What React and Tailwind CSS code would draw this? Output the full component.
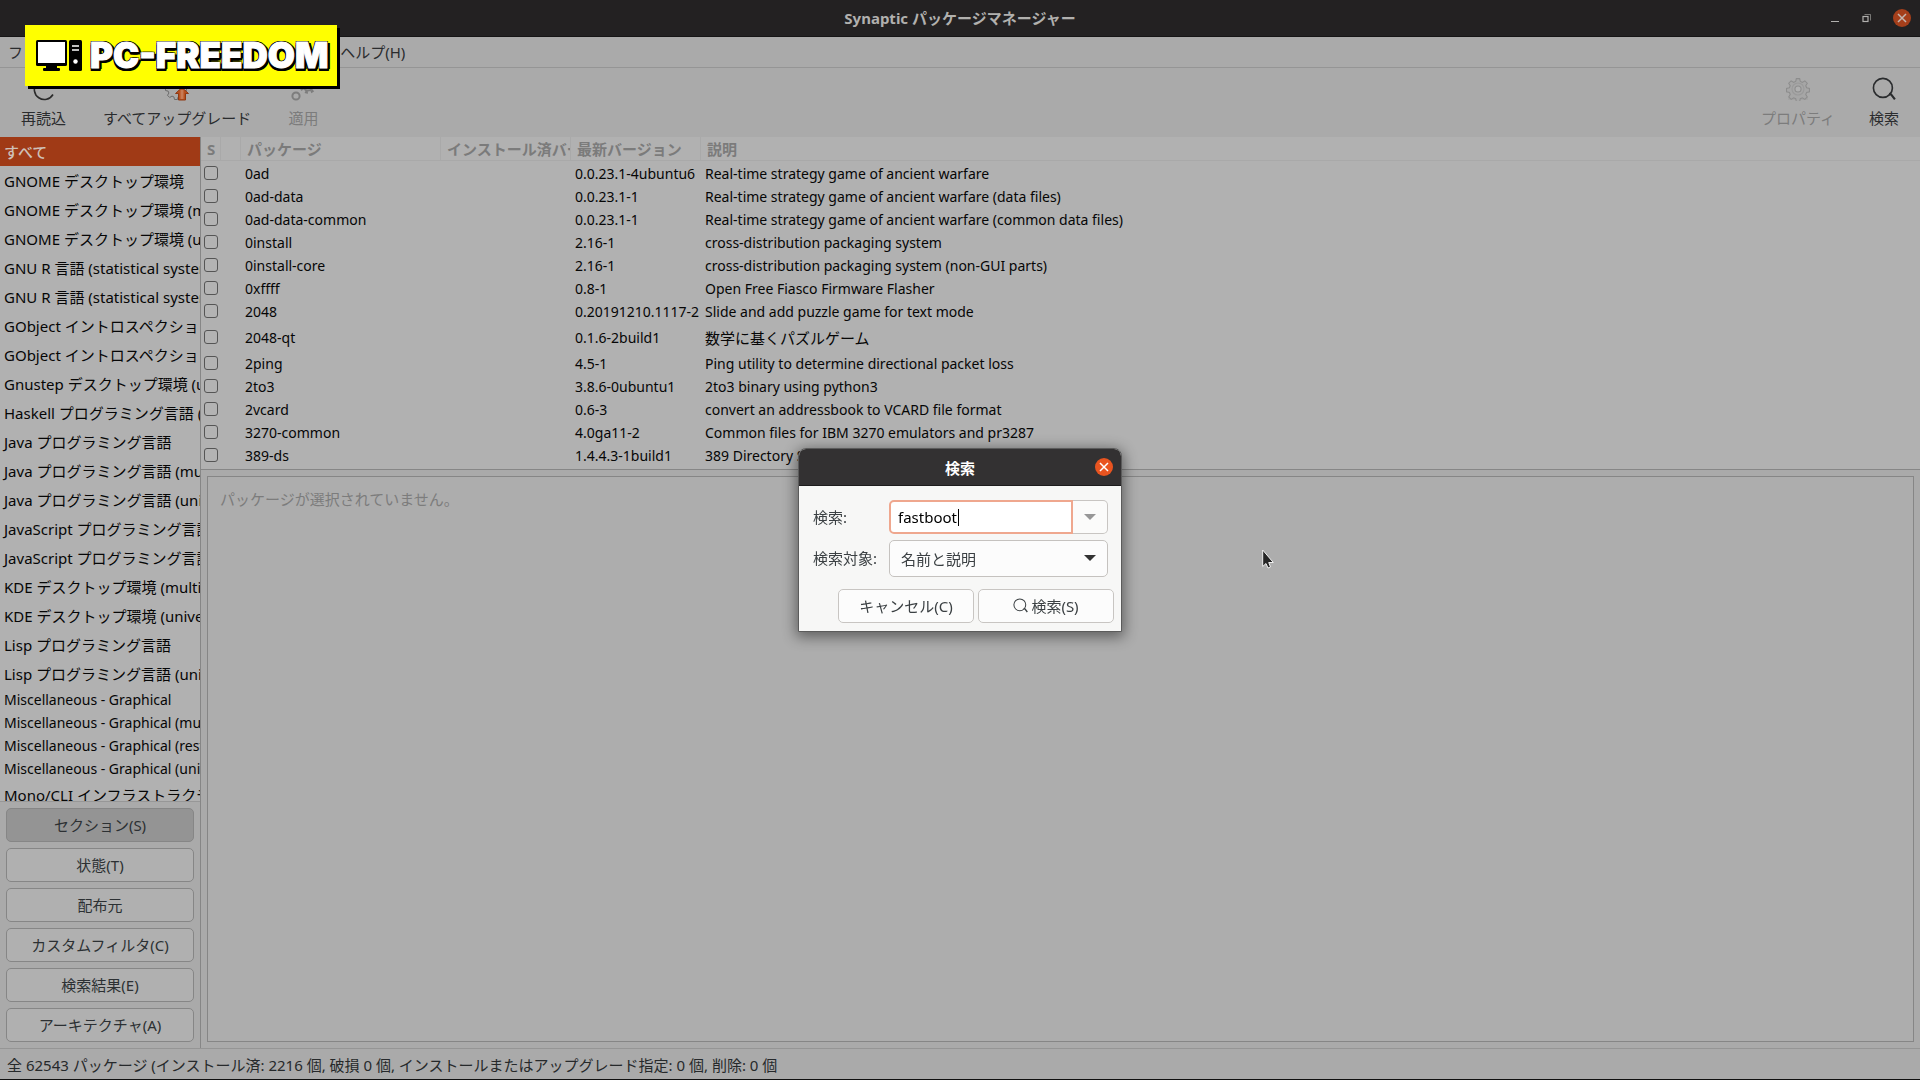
import React from "react";

const sections = [
  "すべて",
  "GNOME デスクトップ環境",
  "GNOME デスクトップ環境 (multiverse)",
  "GNOME デスクトップ環境 (universe)",
  "GNU R 言語 (statistical system)",
  "GNU R 言語 (statistical system) (universe)",
  "GObject イントロスペクション",
  "GObject イントロスペクション (universe)",
  "Gnustep デスクトップ環境 (universe)",
  "Haskell プログラミング言語 (universe)",
  "Java プログラミング言語",
  "Java プログラミング言語 (multiverse)",
  "Java プログラミング言語 (universe)",
  "JavaScript プログラミング言語",
  "JavaScript プログラミング言語 (universe)",
  "KDE デスクトップ環境 (multiverse)",
  "KDE デスクトップ環境 (universe)",
  "Lisp プログラミング言語",
  "Lisp プログラミング言語 (universe)",
  "Miscellaneous - Graphical",
  "Miscellaneous - Graphical (multiverse)",
  "Miscellaneous - Graphical (restricted)",
  "Miscellaneous - Graphical (universe)",
  "Mono/CLI インフラストラクチャ",
];

const packages = [
  ["0ad", "0.0.23.1-4ubuntu6", "Real-time strategy game of ancient warfare"],
  ["0ad-data", "0.0.23.1-1", "Real-time strategy game of ancient warfare (data files)"],
  ["0ad-data-common", "0.0.23.1-1", "Real-time strategy game of ancient warfare (common data files)"],
  ["0install", "2.16-1", "cross-distribution packaging system"],
  ["0install-core", "2.16-1", "cross-distribution packaging system (non-GUI parts)"],
  ["0xffff", "0.8-1", "Open Free Fiasco Firmware Flasher"],
  ["2048", "0.20191210.1117-2", "Slide and add puzzle game for text mode"],
  ["2048-qt", "0.1.6-2build1", "数学に基くパズルゲーム"],
  ["2ping", "4.5-1", "Ping utility to determine directional packet loss"],
  ["2to3", "3.8.6-0ubuntu1", "2to3 binary using python3"],
  ["2vcard", "0.6-3", "convert an addressbook to VCARD file format"],
  ["3270-common", "4.0ga11-2", "Common files for IBM 3270 emulators and pr3287"],
  ["389-ds", "1.4.4.3-1build1", "389 Directory Server suite - metapackage"],
];

const menus = ["ファイル(F)", "編集(E)", "パッケージ(P)", "設定(S)", "ヘルプ(H)"];
const views = ["セクション(S)", "状態(T)", "配布元", "カスタムフィルタ(C)", "検索結果(E)", "アーキテクチャ(A)"];

const hasJapanese = (text) => /[^\x00-\x7f]/.test(text);

const GEAR =
  "M9.5 1.5h3l.6 2.6 1.9.8 2.3-1.4 2.2 2.2-1.4 2.3.8 1.9 2.6.6v3l-2.6.6-.8 1.9 1.4 2.3-2.2 2.2-2.3-1.4-1.9.8-.6 2.6h-3l-.6-2.6-1.9-.8-2.3 1.4-2.2-2.2 1.4-2.3-.8-1.9-2.6-.6v-3l2.6-.6.8-1.9-1.4-2.3 2.2-2.2 2.3 1.4 1.9-.8z";

function ReloadIcon() {
  return (
    <svg className="size-6" viewBox="0 0 24 24" fill="none" stroke="#2b2b2b" strokeWidth="1.6" aria-hidden="true">
      <path d="M21 17.5A10 10 0 1 1 19 5" />
      <path d="M19.5 1v5h-5" />
    </svg>
  );
}

function UpgradeIcon() {
  return (
    <svg className="size-6" viewBox="0 0 24 24" aria-hidden="true">
      <path d={GEAR} fill="#a9a9a9" stroke="#6c6c6c" strokeWidth="1" />
      <path d="M17 10.500l6.500 6h-3v6.500h-7v-6.500h-3z" fill="#b8501f" stroke="#8f3913" strokeWidth="1" />
      <path d="M17 13v9" stroke="#c77b55" strokeWidth="3" />
    </svg>
  );
}

function ApplyIcon() {
  return (
    <svg className="size-6 overflow-visible" viewBox="0 0 24 24" fill="none" stroke="#7d7d7d" aria-hidden="true">
      <circle cx="5" cy="19" r="3.600" strokeWidth="2" />
      <circle cx="17" cy="8" r="5.500" strokeWidth="2" />
      <circle cx="17" cy="8" r="7.500" strokeWidth="2.600" strokeDasharray="2.900 3" />
    </svg>
  );
}

function PropertiesIcon() {
  return (
    <svg className="size-6" viewBox="0 0 22 22" fill="none" stroke="#8d8d8d" strokeWidth="1" aria-hidden="true">
      <path d="M2 20h18" stroke="#a3a3a3" strokeWidth="2" />
      <path d={GEAR} fill="#a6a6a6" />
      <circle cx="11" cy="11" r="5.500" stroke="#9a9a9a" />
      <circle cx="11" cy="11" r="2.800" fill="#b0b0b0" />
    </svg>
  );
}

function SearchIcon({ className }) {
  return (
    <svg className={className} viewBox="0 0 22 22" fill="none" stroke="currentColor" aria-hidden="true">
      <circle cx="10" cy="10" r="8.700" strokeWidth="1.500" />
      <path d="M15.500 15.500l2 .5 3.500 4.500" strokeWidth="2" />
    </svg>
  );
}

function CloseButton({ className }) {
  return (
    <button type="button" aria-label="閉じる" className={className}>
      <svg className="size-2.5" viewBox="0 0 10 10" stroke="currentColor" strokeWidth="1.500" aria-hidden="true">
        <path d="M1 1l8 8M9 1l-8 8" />
      </svg>
    </button>
  );
}

function TitleBar() {
  return (
    <header className="grid h-[37px] shrink-0 grid-cols-[1fr_auto_1fr] items-center border-b border-[#161516] bg-[#232122] text-[#b1b0ae]">
      <h1 className="col-start-2 pt-px text-[15px] font-bold">Synaptic パッケージマネージャー</h1>
      <div className="flex items-center justify-end gap-5 pr-[9px]">
        <button type="button" aria-label="最小化" className="flex size-3 items-end justify-center pb-0.5">
          <span className="h-px w-2 bg-current" />
        </button>
        <button type="button" aria-label="元に戻す" className="flex size-3 items-center justify-center">
          <svg className="size-2.5" viewBox="0 0 10 10" fill="none" stroke="currentColor" aria-hidden="true">
            <path d="M2.500 1.500h6v6" strokeWidth="1" opacity=".6" />
            <rect x="1" y="3.500" width="5" height="5" strokeWidth="1.200" />
          </svg>
        </button>
        <CloseButton className="flex size-[18px] items-center justify-center rounded-full bg-[#a53f1b] text-[#c4b7b1]" />
      </div>
    </header>
  );
}

function ToolButton({ label, disabled, children }) {
  return (
    <button
      type="button"
      disabled={disabled}
      className="flex flex-col items-center gap-1.5 text-[15px] leading-[22px] text-[#2a2c2e] disabled:text-[#7c7c7c]"
    >
      {children}
      {label}
    </button>
  );
}

function Logo() {
  return (
    <div className="absolute top-[25px] left-[25px] flex h-[61px] items-center gap-2 bg-[#ffff00] pr-[9px] pl-[11px] shadow-[3px_3px_0_#000]">
      <svg className="h-[31px] w-[46px]" viewBox="0 0 46 31" aria-hidden="true">
        <rect x="0" y="0" width="31" height="26" rx="1.500" fill="#000" />
        <rect x="2" y="2" width="27" height="21" fill="#fff" />
        <rect x="10" y="25" width="11" height="4" fill="#000" />
        <rect x="7" y="28" width="17" height="3" rx="1" fill="#000" />
        <rect x="33" y="0" width="13" height="31" rx="1.500" fill="#000" />
        <path d="M36 6h7M36 10h7" stroke="#fff" strokeWidth="1.500" />
        <circle cx="39.500" cy="21.500" r="2.200" fill="#fff" />
      </svg>
      <span className="pb-0.5 font-['Inter',sans-serif] text-[35px] leading-[40px] font-black text-white [-webkit-text-stroke:1px_#fff] [text-shadow:-1px_-1px_0_#000,1px_-1px_0_#000,-1px_1px_0_#000,2px_2px_0_#000,0_3px_0_#000,2px_3px_0_#000,-1px_3px_0_#000,3px_1px_0_#000]">
        PC-FREEDOM
      </span>
    </div>
  );
}

function Sidebar() {
  return (
    <aside className="flex w-[201px] shrink-0 flex-col border-r border-[#868686]">
      <ul className="min-h-0 flex-1 overflow-hidden border-b border-[#979797] bg-[#b1b1b1] text-[#060606]">
        {sections.map((name, i) => (
          <li
            key={name}
            className={
              (hasJapanese(name)
                ? "h-[29px] pt-px text-[15px] leading-[29px] "
                : "h-[23px] text-[14px] leading-[23px] ") +
              "overflow-hidden pl-1 whitespace-nowrap " +
              (i === 0 ? "bg-[#a03a16] font-medium text-[#cfc0b8]" : "")
            }
          >
            {name}
          </li>
        ))}
      </ul>
      <div className="flex shrink-0 flex-col gap-1.5 p-1.5">
        {views.map((name, i) => (
          <button
            key={name}
            type="button"
            aria-pressed={i === 0}
            className="h-[34px] rounded-[5px] border border-[#868686] bg-[#b0b0b0] text-[15px] text-[#2c3033] aria-pressed:bg-[#949494]"
          >
            {name}
          </button>
        ))}
      </div>
    </aside>
  );
}

function PackageTable() {
  const head = "overflow-hidden border-r border-[#a9a9a9] pl-1.5 text-left leading-5 font-bold whitespace-nowrap";
  return (
    <div className="shrink-0 border-b border-[#868686] bg-[#b1b1b1] pb-[3px]">
      <table className="w-full table-fixed border-separate border-spacing-0 text-[14px] text-[#060606]">
        <colgroup>
          <col className="w-5" />
          <col className="w-5" />
          <col className="w-[200px]" />
          <col className="w-[130px]" />
          <col className="w-[130px]" />
          <col />
        </colgroup>
        <thead className="text-[15px] text-[#7b7b7b]">
          <tr className="h-6 [&>th]:border-b [&>th]:border-b-[#a9a9a9]">
            <th scope="col" className={head}>S</th>
            <th scope="col" aria-label="状態" className={head}></th>
            <th scope="col" className={head}>パッケージ</th>
            <th scope="col" className={head}>インストール済バージョン</th>
            <th scope="col" className={head}>最新バージョン</th>
            <th scope="col" className="pl-1.5 text-left leading-5 font-bold">説明</th>
          </tr>
        </thead>
        <tbody>
          {packages.map(([name, version, summary]) => (
            <tr key={name} className={hasJapanese(summary) ? "h-[29px]" : "h-[23px]"}>
              <td className="p-0 pl-[3px]">
                <input
                  type="checkbox"
                  aria-label={name}
                  className="block size-3.5 appearance-none rounded-[3px] border border-[#555] bg-[#b3b3b3]"
                />
              </td>
              <td></td>
              <td className="p-0 pt-0.5 pl-1 leading-5 whitespace-nowrap">{name}</td>
              <td></td>
              <td className="p-0 pt-0.5 pl-1 leading-5 whitespace-nowrap">{version}</td>
              <td className={"p-0 pt-0.5 pl-1 leading-5 whitespace-nowrap " + (hasJapanese(summary) ? "text-[15px]" : "")}>
                {summary}
              </td>
            </tr>
          ))}
        </tbody>
      </table>
    </div>
  );
}

function SearchDialog() {
  return (
    <div className="fixed inset-0 flex items-center justify-center">
      <div
        role="dialog"
        aria-labelledby="search-title"
        className="w-[324px] overflow-hidden rounded-t-lg border border-[#5b5b5b] bg-[#f7f7f6] text-[15px] text-[#3b4043] shadow-[0_3px_14px_2px_rgba(0,0,0,0.45)]"
      >
        <div className="grid h-[37px] grid-cols-[1fr_auto_1fr] items-center border-b border-[#1d1c1d] bg-[#333132]">
          <h2 id="search-title" className="col-start-2 pt-0.5 font-bold text-white">検索</h2>
          <CloseButton className="mr-2 flex size-[18px] items-center justify-center justify-self-end rounded-full bg-[#e95420] text-white" />
        </div>
        <form className="flex flex-col pb-2" onSubmit={(e) => e.preventDefault()}>
          <div className="grid grid-cols-[76px_1fr] items-center gap-y-1.5 pt-3.5 pr-[13px] pl-3.5">
            <label htmlFor="query">検索:</label>
            <div className="relative flex h-[34px]">
              <input
                id="query"
                type="text"
                defaultValue="fastboot"
                className="w-full min-w-0 rounded-l-[5px] border-2 border-[#efa78e] bg-white pl-[7px] text-black outline-none"
              />
              <span aria-hidden="true" className="absolute top-[9px] left-[69px] h-[17px] w-px bg-black" />
              <button
                type="button"
                aria-label="検索履歴"
                className="flex w-[35px] shrink-0 items-center justify-center rounded-r-[5px] border border-l-0 border-[#c8c5c2] bg-[#fbfbfa]"
              >
                <svg className="h-1.5 w-3" viewBox="0 0 12 6" fill="#979797" aria-hidden="true">
                  <path d="M0 0h12L6 6z" />
                </svg>
              </button>
            </div>
            <label htmlFor="target">検索対象:</label>
            <div className="relative">
              <select
                id="target"
                className="h-[37px] w-full appearance-none rounded-[5px] border border-[#c5c2bf] bg-[#fcfcfc] pt-0.5 pl-[11px] outline-none"
              >
                <option>名前と説明</option>
                <option>名前</option>
                <option>メンテナー</option>
                <option>バージョン</option>
              </select>
              <svg
                className="pointer-events-none absolute top-[15px] right-3 h-1.5 w-3"
                viewBox="0 0 12 6"
                fill="#333"
                aria-hidden="true"
              >
                <path d="M0 0h12L6 6z" />
              </svg>
            </div>
          </div>
          <div className="mt-3 flex justify-end gap-1 pr-[7px]">
            <button type="button" className="h-[34px] w-[136px] rounded-[5px] border border-[#c8c5c2] bg-[#fcfcfc]">
              キャンセル(C)
            </button>
            <button
              type="submit"
              className="flex h-[34px] w-[136px] items-center justify-center gap-[3px] rounded-[5px] border border-[#c8c5c2] bg-[#fcfcfc]"
            >
              <SearchIcon className="mb-0.5 size-[15px]" />
              検索(S)
            </button>
          </div>
        </form>
      </div>
    </div>
  );
}

export default function App() {
  return (
    <div className="relative flex h-screen flex-col overflow-hidden border-b border-[#101010] bg-[#aaaaaa] font-['Noto_Sans','Noto_Sans_CJK_JP',sans-serif]">
      <TitleBar />
      <nav className="flex h-[31px] shrink-0 items-center gap-[17px] border-b border-[#959595] px-2 pt-px text-[15px] text-[#2a2c2e]">
        {menus.map((name) => (
          <button key={name} type="button">
            {name}
          </button>
        ))}
      </nav>
      <div className="flex h-[69px] shrink-0 items-center justify-between px-[21px]">
        <div className="flex gap-[37px]">
          <ToolButton label="再読込">
            <ReloadIcon />
          </ToolButton>
          <ToolButton label="すべてアップグレード">
            <UpgradeIcon />
          </ToolButton>
          <ToolButton label="適用" disabled>
            <ApplyIcon />
          </ToolButton>
        </div>
        <div className="flex gap-[34px]">
          <ToolButton label="プロパティ" disabled>
            <PropertiesIcon />
          </ToolButton>
          <ToolButton label="検索">
            <SearchIcon className="size-6" />
          </ToolButton>
        </div>
      </div>
      <main className="flex min-h-0 flex-1">
        <Sidebar />
        <div className="flex min-w-0 flex-1 flex-col">
          <PackageTable />
          <section className="m-1.5 flex-1 border border-[#868686] bg-[#adadad] px-3 py-[11px] text-[15px] text-[#7c7c7c]">
            パッケージが選択されていません。
          </section>
        </div>
      </main>
      <footer className="flex h-[31px] shrink-0 items-center border-t border-[#959595] px-[7px] pt-0.5 text-[15px] whitespace-nowrap text-[#26292b]">
        全 62543 パッケージ (インストール済: 2216 個, 破損 0 個, インストールまたはアップグレード指定: 0 個, 削除: 0 個
      </footer>
      <Logo />
      <svg className="absolute top-[549px] left-[1262px] h-5 w-3" viewBox="0 0 12 20" aria-hidden="true">
        <path
          d="M.7 1v16.500l3.300-3 2 4.500 2.500-1-1.800-4.500h4.600z"
          fill="#262626"
          stroke="#f0f0f0"
          strokeWidth="1"
        />
      </svg>
      <SearchDialog />
    </div>
  );
}
